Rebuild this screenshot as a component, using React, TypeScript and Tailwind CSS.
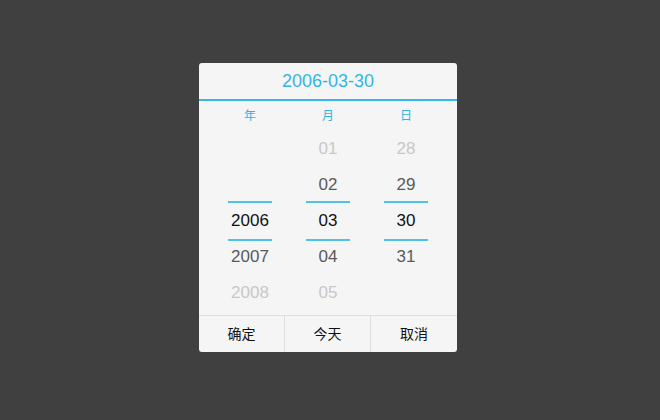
import React, { useState } from "react";

type Col = {
    label: string;
    items: string[];
    selected: number;
};

const columns: Col[] = [
    { label: "年", items: ["", "", "2006", "2007", "2008"], selected: 2 },
    { label: "月", items: ["01", "02", "03", "04", "05"], selected: 2 },
    { label: "日", items: ["28", "29", "30", "31", ""], selected: 2 },
];

const itemColor = (i: number, selected: number) => {
    const d = Math.abs(i - selected);
    if (d === 0) return "text-[#111111]";
    if (d === 1) return "text-[#5a5a5a]";
    return "text-[#c8c8c8]";
};

const App: React.FC = () => {
    const [value] = useState<string>("2006-03-30");

    return (
        <div
            className="w-[660px] h-[420px] bg-[#404040] flex items-start pl-[199px] pt-[63px]"
            style={{ fontFamily: '"Liberation Sans", Arial, "Noto Sans CJK SC", sans-serif' }}
        >
            <div className="w-[258px] bg-[#f5f5f5] rounded-[3px] flex flex-col overflow-hidden">
                <div className="h-[38px] flex items-center justify-center text-[18px] text-[#31b6e7] border-b-2 border-[#35b8e8]">
                    {value}
                </div>

                <div className="flex pl-[12px] pr-[10px] pb-[4px]">
                    {columns.map((col) => (
                        <div key={col.label} className="w-[78px] flex flex-col items-center">
                            <div className="h-[30px] flex items-center justify-center text-[12px] text-[#2fb4e6]">
                                {col.label}
                            </div>
                            {col.items.map((item, i) => (
                                <div
                                    key={i}
                                    className={
                                        i === col.selected
                                            ? "relative h-[36px] w-full flex items-center justify-center text-[17px] " +
                                              itemColor(i, col.selected)
                                            : "h-[36px] w-full flex items-center justify-center text-[17px] " +
                                              itemColor(i, col.selected)
                                    }
                                >
                                    {i === col.selected && (
                                        <>
                                            <span className="absolute left-[17px] right-[17px] top-[-2px] h-[2px] bg-[#50c1ec]" />
                                            <span className="absolute left-[17px] right-[17px] bottom-[-2px] h-[2px] bg-[#50c1ec]" />
                                        </>
                                    )}
                                    {item}
                                </div>
                            ))}
                        </div>
                    ))}
                </div>

                <div className="flex border-t border-[#dedede] h-[37px] text-[14px] text-[#111111]">
                    <button className="w-[86px] flex items-center justify-center border-r border-[#dedede]">确定</button>
                    <button className="w-[86px] flex items-center justify-center border-r border-[#dedede]">今天</button>
                    <button className="flex-1 flex items-center justify-center">取消</button>
                </div>
            </div>
        </div>
    );
};

export default App;
